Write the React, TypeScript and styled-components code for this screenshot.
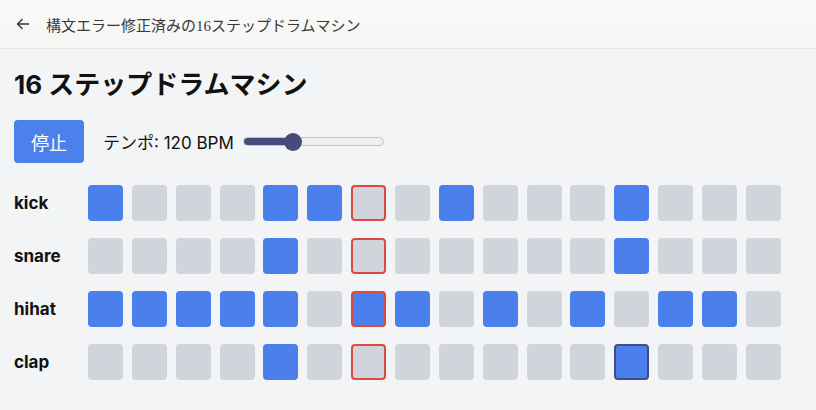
import React, { useState } from "react";
import styled, { createGlobalStyle, css } from "styled-components";

const Global = createGlobalStyle`
  html, body { margin: 0; padding: 0; }
  body {
    background: #f3f4f6;
    font-family: "Inter", "Noto Sans CJK JP", sans-serif;
    color: #111;
  }
`;

const Header = styled.header`
  height: 48px;
  display: flex;
  align-items: center;
  gap: 16px;
  padding: 0 16px;
  background: linear-gradient(#fafaf8, #f5f5f3);
  border-bottom: 1px solid #e4e4e2;
`;

const BackIcon = styled.svg`
  width: 14px;
  height: 14px;
  color: #333;
`;

const HeaderTitle = styled.h1`
  margin: 0;
  font-family: "Liberation Serif", "Noto Sans CJK JP", serif;
  font-weight: 400;
  font-size: 15px;
  color: #3a3a3a;
  letter-spacing: 0;
`;

const Main = styled.main`
  padding: 18px 14px 0;
`;

const Title = styled.h2`
  margin: 0 0 17px;
  font-size: 26px;
  line-height: 36px;
  font-weight: 700;
  color: #111;
`;

const Controls = styled.div`
  display: flex;
  align-items: center;
  gap: 19px;
  margin-bottom: 22px;
`;

const StopButton = styled.button`
  width: 70px;
  height: 43px;
  border: none;
  border-radius: 4px;
  background: #4c80ed;
  color: #fff;
  font-family: inherit;
  font-size: 18px;
  cursor: pointer;
`;

const TempoLabel = styled.span`
  font-size: 17px;
  color: #111;
`;

const Slider = styled.input`
  -webkit-appearance: none;
  appearance: none;
  box-sizing: border-box;
  width: 141px;
  height: 9px;
  margin: 0 0 0 -10px;
  border-radius: 5px;
  border: 1px solid #c4c4c4;
  outline: none;
  &::-webkit-slider-thumb {
    -webkit-appearance: none;
    width: 18px;
    height: 18px;
    border-radius: 50%;
    background: #474b7c;
    border: none;
  }
`;

const Grid = styled.div`
  display: flex;
  flex-direction: column;
  gap: 17px;
`;

const Row = styled.div`
  display: flex;
  align-items: center;
`;

const Label = styled.div`
  width: 74px;
  font-size: 17px;
  font-weight: 700;
  color: #111;
`;

const Steps = styled.div`
  display: flex;
  gap: 8.87px;
`;

const Cell = styled.div<{ $on: boolean; $current: boolean; $focus: boolean }>`
  width: 35px;
  height: 36px;
  box-sizing: border-box;
  border-radius: 4px;
  background: ${(p) => (p.$on ? "#4b7fec" : "#d1d5db")};
  ${(p) =>
    p.$current &&
    css`
      border: 2px solid #dc4a3e;
    `}
  ${(p) =>
    p.$focus &&
    css`
      border: 2px solid #414c86;
    `}
`;

const tracks: { name: string; on: number[] }[] = [
  { name: "kick", on: [0, 4, 5, 8, 12] },
  { name: "snare", on: [4, 12] },
  { name: "hihat", on: [0, 1, 2, 3, 4, 6, 7, 9, 11, 13, 14] },
  { name: "clap", on: [4, 12] },
];

export default function App() {
  const [bpm, setBpm] = useState(120);
  const pct = ((bpm - 60) / (240 - 60)) * 100;
  const current = 6;
  return (
    <>
      <Global />
      <Header>
        <BackIcon viewBox="0 0 14 14" fill="none" stroke="currentColor" strokeWidth="1.3">
          <path d="M13 7H1.5M6.5 2L1.5 7l5 5" />
        </BackIcon>
        <HeaderTitle>構文エラー修正済みの16ステップドラムマシン</HeaderTitle>
      </Header>
      <Main>
        <Title>16 ステップドラムマシン</Title>
        <Controls>
          <StopButton>停止</StopButton>
          <TempoLabel>テンポ: {bpm} BPM</TempoLabel>
          <Slider
            type="range"
            min={60}
            max={240}
            value={bpm}
            onChange={(e) => setBpm(Number(e.target.value))}
            style={{
              background: `linear-gradient(to right, #474b7c 0%, #474b7c ${pct}%, #efefef ${pct}%, #efefef 100%)`,
            }}
          />
        </Controls>
        <Grid>
          {tracks.map((t, r) => (
            <Row key={t.name}>
              <Label>{t.name}</Label>
              <Steps>
                {Array.from({ length: 16 }, (_, i) => (
                  <Cell
                    key={i}
                    $on={t.on.includes(i)}
                    $current={i === current}
                    $focus={r === 3 && i === 12}
                  />
                ))}
              </Steps>
            </Row>
          ))}
        </Grid>
      </Main>
    </>
  );
}
